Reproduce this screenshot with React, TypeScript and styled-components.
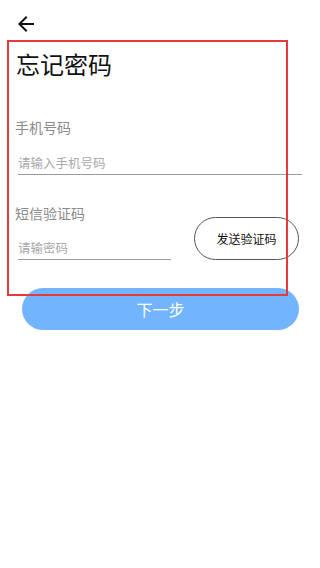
import styled, { createGlobalStyle } from "styled-components";

const GlobalStyle = createGlobalStyle`
  html, body {
    margin: 0;
    padding: 0;
    background: #fff;
  }
  body {
    font-family: "Noto Sans CJK SC", "Noto Sans", sans-serif;
  }
`;

const Page = styled.div`
  position: relative;
  width: 320px;
  height: 568px;
  background: #fff;
  box-sizing: border-box;
`;

const TopBar = styled.div`
  height: 36px;
  padding: 12px 0 0 14px;
  box-sizing: border-box;
`;

const BackButton = styled.button`
  width: 24px;
  height: 24px;
  padding: 0;
  border: none;
  background: none;
  display: flex;
  align-items: center;
  justify-content: center;
  cursor: pointer;
`;

const Content = styled.div`
  padding: 11px 18px 0 15px;
`;

const Title = styled.h1`
  margin: 0;
  font-size: 24px;
  font-weight: 400;
  line-height: 34px;
  color: #111;
  padding-left: 1px;
`;

const Label = styled.div<{ $top: number }>`
  margin-top: ${(p) => p.$top}px;
  font-size: 14px;
  line-height: 20px;
  color: #8a8a8a;
`;

const FieldRow = styled.div`
  display: flex;
  align-items: flex-start;
  gap: 23px;
`;

const Input = styled.input<{ $width: string; $top: number }>`
  display: block;
  width: ${(p) => p.$width};
  margin: ${(p) => p.$top}px 0 0 3px;
  padding: 0 0 3px 0;
  height: 22px;
  box-sizing: border-box;
  border: none;
  border-bottom: 1px solid #9a9a9a;
  outline: none;
  font-family: inherit;
  font-size: 12.5px;
  color: #333;
  background: transparent;

  &::placeholder {
    color: #a8a8a8;
  }
`;

const SendButton = styled.button`
  width: 105px;
  height: 43px;
  margin-top: -6px;
  border: 1px solid #555;
  border-radius: 22px;
  background: #fff;
  font-family: inherit;
  font-size: 12px;
  color: #111;
  cursor: pointer;
`;

const NextButton = styled.button`
  display: block;
  width: 277px;
  height: 42px;
  margin: 28px 0 0 7px;
  border: none;
  border-radius: 21px;
  background: #72b4fe;
  color: #fff;
  font-family: inherit;
  font-size: 16px;
  cursor: pointer;
`;

const Highlight = styled.div`
  position: absolute;
  left: 7px;
  top: 40px;
  width: 281px;
  height: 256px;
  box-sizing: border-box;
  border: 2px solid #e43a3a;
  pointer-events: none;
`;

const ForgotPassword = () => {
  return (
    <Page>
      <GlobalStyle />
      <TopBar>
        <BackButton aria-label="返回">
          <svg width="24" height="24" viewBox="0 0 24 24">
            <path
              d="M20 11H7.83l5.59-5.59L12 4l-8 8 8 8 1.41-1.41L7.83 13H20v-2z"
              fill="#111"
            />
          </svg>
        </BackButton>
      </TopBar>
      <Content>
        <Title>忘记密码</Title>
        <Label $top={36}>手机号码</Label>
        <Input $width="284px" $top={16} placeholder="请输入手机号码" />
        <Label $top={28}>短信验证码</Label>
        <FieldRow>
          <Input $width="153px" $top={15} placeholder="请输密码" />
          <SendButton>发送验证码</SendButton>
        </FieldRow>
        <NextButton>下一步</NextButton>
      </Content>
      <Highlight />
    </Page>
  );
};

export default ForgotPassword;
